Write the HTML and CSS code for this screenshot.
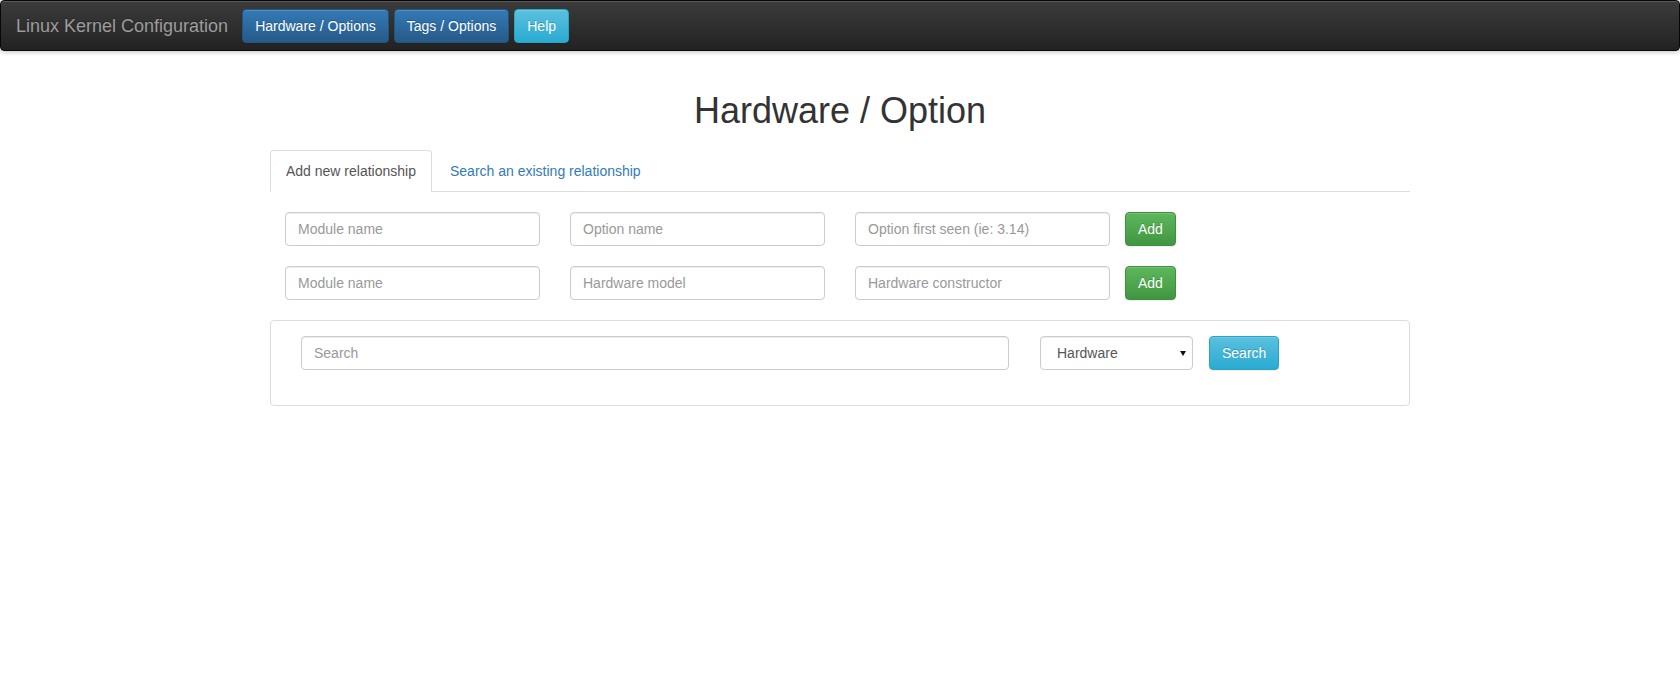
FILE: index.html
```html
<!DOCTYPE html>
<html lang="en">
<head>
<meta charset="utf-8">
<title>Linux Kernel Configuration</title>
<link rel="stylesheet" href="styles.css">
</head>
<body>
<nav class="navbar">
  <a class="brand" href="#">Linux Kernel Configuration</a>
  <div class="nav-buttons">
    <a class="btn btn-primary" href="#">Hardware / Options</a>
    <a class="btn btn-primary" href="#">Tags / Options</a>
    <a class="btn btn-info" href="#">Help</a>
  </div>
</nav>
<main class="container">
  <h1 class="title">Hardware / Option</h1>
  <ul class="tabs">
    <li class="tab active"><a href="#">Add new relationship</a></li>
    <li class="tab"><a href="#">Search an existing relationship</a></li>
  </ul>
  <form class="form-row">
    <div class="col"><input class="form-control" type="text" placeholder="Module name"></div>
    <div class="col"><input class="form-control" type="text" placeholder="Option name"></div>
    <div class="col"><input class="form-control" type="text" placeholder="Option first seen (ie: 3.14)"></div>
    <div class="col-btn"><button class="btn btn-success" type="button">Add</button></div>
  </form>
  <form class="form-row">
    <div class="col"><input class="form-control" type="text" placeholder="Module name"></div>
    <div class="col"><input class="form-control" type="text" placeholder="Hardware model"></div>
    <div class="col"><input class="form-control" type="text" placeholder="Hardware constructor"></div>
    <div class="col-btn"><button class="btn btn-success" type="button">Add</button></div>
  </form>
  <section class="panel">
    <form class="search-row">
      <input class="form-control" type="text" placeholder="Search">
      <div class="select-wrap">
        <select class="form-control select">
          <option>Hardware</option>
          <option>Option</option>
        </select>
      </div>
      <button class="btn btn-info" type="button">Search</button>
    </form>
  </section>
</main>
</body>
</html>
```
FILE: styles.css
```css
* { box-sizing: border-box; }
html, body { margin: 0; padding: 0; background: #fff; }
body {
  font-family: "Liberation Sans", Arial, Helvetica, sans-serif;
  font-size: 14px;
  line-height: 1.42857;
  color: #333;
}
a { text-decoration: none; }

.navbar {
  height: 51px;
  display: flex;
  align-items: center;
  background-image: linear-gradient(to bottom, #3c3c3c 0, #222 100%);
  border: 1px solid #080808;
  border-radius: 4px;
  box-shadow: inset 0 1px 0 rgba(255,255,255,.15), 0 1px 5px rgba(0,0,0,.25);
}
.brand {
  padding: 0 15px;
  font-size: 18px;
  line-height: 20px;
  color: #9d9d9d;
  text-shadow: 0 -1px 0 rgba(0,0,0,.25);
}
.nav-buttons { display: flex; gap: 5px; margin-left: -1px; }

.btn {
  display: inline-block;
  height: 34px;
  padding: 6px 12px;
  font-family: inherit;
  font-size: 14px;
  line-height: 20px;
  color: #fff;
  border: 1px solid transparent;
  border-radius: 4px;
  text-shadow: 0 -1px 0 rgba(0,0,0,.2);
  box-shadow: inset 0 1px 0 rgba(255,255,255,.15), 0 1px 1px rgba(0,0,0,.075);
  cursor: pointer;
  white-space: nowrap;
}
.btn-primary {
  background-image: linear-gradient(to bottom, #337ab7 0, #265a88 100%);
  border-color: #245580;
}
.btn-info {
  background-image: linear-gradient(to bottom, #5bc0de 0, #2aabd2 100%);
  border-color: #28a4c9;
}
.btn-success {
  background-image: linear-gradient(to bottom, #5cb85c 0, #419641 100%);
  border-color: #3e8f3e;
}

.container {
  width: 1140px;
  margin: 0 auto;
}
.title {
  margin: 40px 0 19px;
  font-size: 36px;
  font-weight: 500;
  line-height: 1.1;
  text-align: center;
  color: #333;
}

.tabs {
  display: flex;
  list-style: none;
  margin: 0;
  padding: 0;
  border-bottom: 1px solid #ddd;
}
.tab { margin-bottom: -1px; }
.tab a {
  display: block;
  margin-right: 2px;
  padding: 10px 15px;
  line-height: 20px;
  color: #337ab7;
  border: 1px solid transparent;
  border-radius: 4px 4px 0 0;
}
.tab.active a {
  color: #555;
  background: #fff;
  border-color: #ddd #ddd transparent;
}

.form-row {
  display: grid;
  grid-template-columns: 285px 285px 285px auto;
  margin-top: 20px;
}
.col { padding: 0 15px; }
.col-btn { padding: 0; }

.form-control {
  display: block;
  width: 100%;
  height: 34px;
  padding: 6px 12px;
  font-family: inherit;
  font-size: 14px;
  line-height: 20px;
  color: #555;
  background: #fff;
  border: 1px solid #ccc;
  border-radius: 4px;
  box-shadow: inset 0 1px 1px rgba(0,0,0,.075);
}
.form-control::placeholder { color: #999; }

.panel {
  margin-top: 20px;
  height: 86px;
  border: 1px solid #ddd;
  border-radius: 4px;
  box-shadow: 0 1px 2px rgba(0,0,0,.05);
  padding: 15px 30px 0;
}
.search-row {
  display: grid;
  grid-template-columns: 708px 153px auto;
  align-items: start;
}
.select-wrap {
  position: relative;
  margin-left: 31px;
  width: 153px;
}
.select-wrap::after {
  content: "";
  position: absolute;
  right: 7px;
  top: 15px;
  border-left: 3.5px solid transparent;
  border-right: 3.5px solid transparent;
  border-top: 5px solid #111;
  pointer-events: none;
}
.select {
  -webkit-appearance: none;
  appearance: none;
  padding-left: 16px;
  padding-right: 20px;
}
.search-row .btn { margin-left: 47px; justify-self: start; }
```
